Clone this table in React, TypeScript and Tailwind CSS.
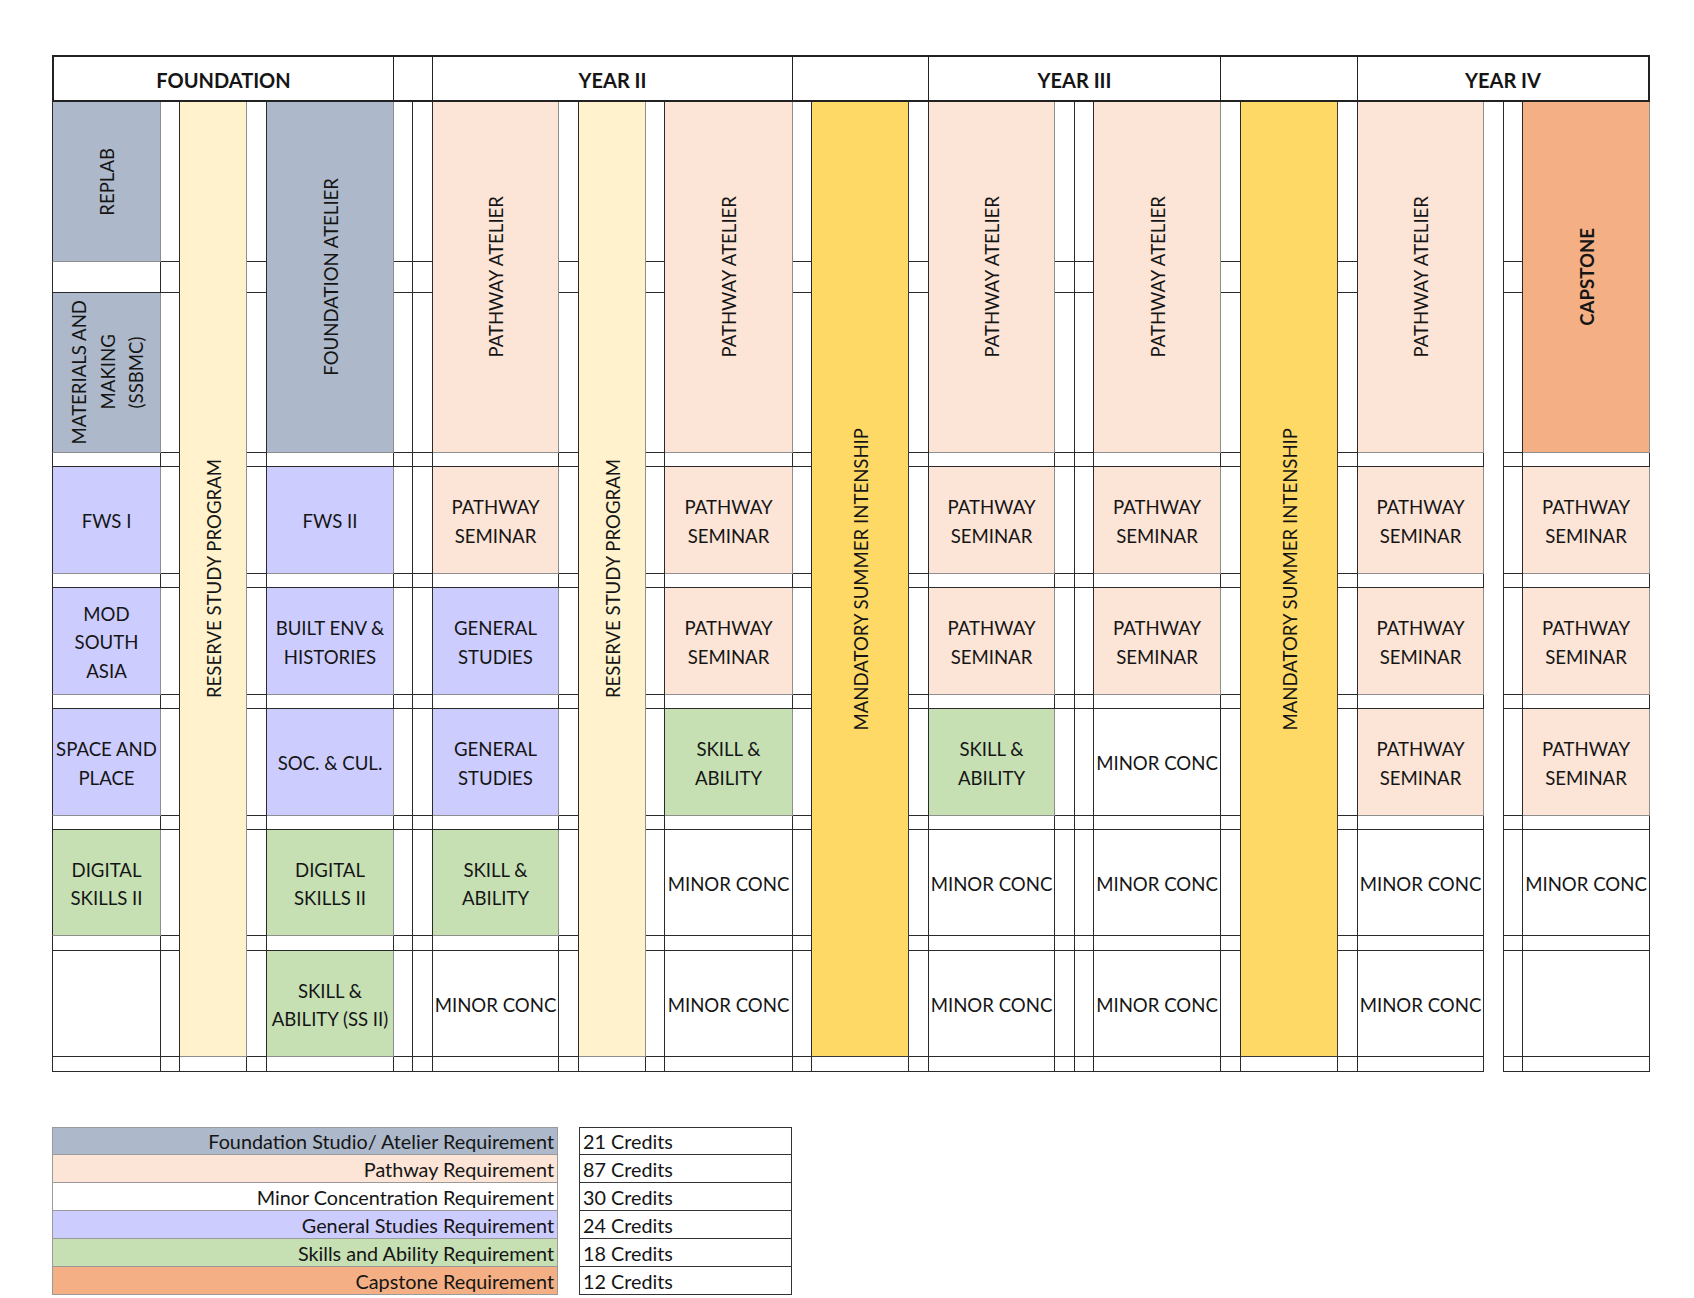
import React from 'react';

type Kind = 'slate' | 'peach' | 'lav' | 'green' | 'cream' | 'yellow' | 'orange' | 'white';

interface CellData {
  text?: string;
  kind: Kind;
  vertical?: boolean;
  bold?: boolean;
}

const bgClass: Record<Kind, string> = {
  slate: 'bg-[#adb9ca] border-[#8e8e8e]',
  peach: 'bg-[#fce4d6] border-[#8e8e8e]',
  lav: 'bg-[#ccccff] border-[#8e8e8e]',
  green: 'bg-[#c6e0b4] border-[#8e8e8e]',
  cream: 'bg-[#fff2cc] border-[#8e8e8e]',
  yellow: 'bg-[#ffd966] border-[#3a3a3a]',
  orange: 'bg-[#f4b084] border-[#8e8e8e]',
  white: 'bg-white border-[#2a2a2a]',
};

const spanClass: Record<number, string> = {
  1: '',
  3: 'row-span-3',
  13: 'row-span-13',
  14: 'row-span-14',
};

const PS: CellData = { text: 'PATHWAY\nSEMINAR', kind: 'peach' };
const MC: CellData = { text: 'MINOR CONC', kind: 'white' };
const GS: CellData = { text: 'GENERAL\nSTUDIES', kind: 'lav' };
const SA: CellData = { text: 'SKILL &\nABILITY', kind: 'green' };
const PA: CellData = { text: 'PATHWAY ATELIER', kind: 'peach', vertical: true };

// content columns: c1, c5, c8, c12, c16, c19, c23, c26
const contentCols = [0, 4, 7, 11, 15, 18, 22, 25];

const contentRows: CellData[][] = [
  [
    { text: 'REPLAB', kind: 'slate', vertical: true },
    { text: 'FOUNDATION ATELIER', kind: 'slate', vertical: true },
    PA, PA, PA, PA, PA,
    { text: 'CAPSTONE', kind: 'orange', vertical: true, bold: true },
  ],
  [{ text: 'MATERIALS AND\nMAKING\n(SSBMC)', kind: 'slate', vertical: true }],
  [
    { text: 'FWS I', kind: 'lav' },
    { text: 'FWS II', kind: 'lav' },
    PS, PS, PS, PS, PS, PS,
  ],
  [
    { text: 'MOD\nSOUTH\nASIA', kind: 'lav' },
    { text: 'BUILT ENV &\nHISTORIES', kind: 'lav' },
    GS, PS, PS, PS, PS, PS,
  ],
  [
    { text: 'SPACE AND\nPLACE', kind: 'lav' },
    { text: 'SOC. & CUL.', kind: 'lav' },
    GS, SA, SA, MC, PS, PS,
  ],
  [
    { text: 'DIGITAL\nSKILLS II', kind: 'green' },
    { text: 'DIGITAL\nSKILLS II', kind: 'green' },
    SA, MC, MC, MC, MC, MC,
  ],
  [
    { kind: 'white' },
    { text: 'SKILL &\nABILITY (SS II)', kind: 'green' },
    MC, MC, MC, MC, MC,
    { kind: 'white' },
  ],
];

// tall cells that start in the first body row
const tallCells: Record<number, { cell: CellData; span: number }> = {
  2: { cell: { text: 'RESERVE STUDY PROGRAM', kind: 'cream', vertical: true }, span: 13 },
  9: { cell: { text: 'RESERVE STUDY PROGRAM', kind: 'cream', vertical: true }, span: 13 },
  13: { cell: { text: 'MANDATORY SUMMER INTENSHIP', kind: 'yellow', vertical: true }, span: 13 },
  20: { cell: { text: 'MANDATORY SUMMER INTENSHIP', kind: 'yellow', vertical: true }, span: 13 },
};

const ROWS = 14;
const COLS = 26;

const BodyCell: React.FC<{ cell: CellData; span: number; first: boolean }> = ({ cell, span, first }) => {
  return (
    <div
      className={`flex items-center justify-center border-r border-b text-center ${bgClass[cell.kind]} ${spanClass[span]} ${first ? 'border-l border-l-[#2a2a2a]' : ''} ${cell.vertical ? 'pl-[2px]' : 'pt-[3px]'}`}
    >
      {cell.text && (
        <span
          className={`whitespace-pre-line leading-[28.5px] ${cell.vertical ? '[writing-mode:vertical-rl] rotate-180' : ''} ${cell.bold ? 'font-bold' : ''}`}
        >
          {cell.text}
        </span>
      )}
    </div>
  );
};

function buildBody() {
  const taken: boolean[][] = Array.from({ length: ROWS }, () => Array(COLS).fill(false));
  const out: React.ReactNode[] = [];
  for (let r = 0; r < ROWS; r++) {
    for (let c = 0; c < COLS; c++) {
      if (taken[r][c]) continue;
      let cell: CellData = { kind: 'white' };
      let span = 1;
      if (r === 0 && tallCells[c]) {
        cell = tallCells[c].cell;
        span = tallCells[c].span;
      } else if (r === 0 && c === 23) {
        // empty spacer column in year IV
        for (let k = 0; k < ROWS; k++) taken[k][c] = true;
        out.push(<div key={`${r}-${c}`} className="row-span-14 border-r border-[#2a2a2a] bg-white" />);
        continue;
      } else if (r % 2 === 0 && contentCols.includes(c)) {
        const row = contentRows[r / 2];
        const item = row[contentCols.indexOf(c)];
        if (item) cell = item;
        if (r === 0 && c !== 0) span = 3;
      }
      for (let k = 0; k < span; k++) taken[r + k][c] = true;
      out.push(<BodyCell key={`${r}-${c}`} cell={cell} span={span} first={c === 0} />);
    }
  }
  return out;
}

const legend = [
  { label: 'Foundation Studio/ Atelier Requirement', credits: '21 Credits', bg: 'bg-[#adb9ca]' },
  { label: 'Pathway Requirement', credits: '87 Credits', bg: 'bg-[#fce4d6]' },
  { label: 'Minor Concentration Requirement', credits: '30 Credits', bg: 'bg-white' },
  { label: 'General Studies Requirement', credits: '24 Credits', bg: 'bg-[#ccccff]' },
  { label: 'Skills and Ability Requirement', credits: '18 Credits', bg: 'bg-[#c6e0b4]' },
  { label: 'Capstone Requirement', credits: '12 Credits', bg: 'bg-[#f4b084]' },
];

export default function App() {
  return (
    <div className="min-h-screen bg-white pt-[55px] pb-[20px] text-[18.6px] text-[#151515] font-['Lato',sans-serif]">
      <div className="ml-[52px] grid w-[1598px] grid-cols-[109px_19px_67px_20px_127px_19px_20px_126px_20px_67px_19px_128px_19px_97px_20px_126px_20px_19px_127px_20px_97px_20px_126px_20px_19px_127px] grid-rows-[47px_160px_31px_160px_14px_107px_14px_107px_14px_107px_14px_106px_15px_106px_15px]">
        {/* header */}
        <div className="col-span-5 flex items-center justify-center border-y-2 border-l-2 border-r border-[#222] pt-[3px] text-[20px] font-bold">FOUNDATION</div>
        <div className="col-span-2 border-y-2 border-r border-[#222]" />
        <div className="col-span-5 flex items-center justify-center border-y-2 border-r border-[#222] pt-[3px] text-[20px] font-bold">YEAR II</div>
        <div className="col-span-3 border-y-2 border-r border-[#222]" />
        <div className="col-span-4 flex items-center justify-center border-y-2 border-r border-[#222] pt-[3px] text-[20px] font-bold">YEAR III</div>
        <div className="col-span-3 border-y-2 border-r border-[#222]" />
        <div className="col-span-4 flex items-center justify-center border-y-2 border-r-2 border-[#222] pt-[3px] text-[20px] font-bold">YEAR IV</div>
        {buildBody()}
      </div>

      {/* legend */}
      <div className="ml-[52px] mt-[55px] grid w-[740px] grid-cols-[506px_213px] gap-x-[21px]">
        {legend.map((l, i) => (
          <React.Fragment key={l.label}>
            <div
              className={`flex h-[28px] items-center justify-end overflow-hidden border-x border-b border-[#9a9a9a] pr-[3px] pt-[2px] text-[19.8px] ${l.bg} ${i === 0 ? 'border-t' : ''}`}
            >
              <span className="whitespace-nowrap">{l.label}</span>
            </div>
            <div
              className={`flex h-[28px] items-center border-x border-b border-[#333] pl-[3px] pt-[2px] text-[19.8px] ${i === 0 ? 'border-t' : ''}`}
            >
              <span className="whitespace-nowrap">{l.credits}</span>
            </div>
          </React.Fragment>
        ))}
      </div>
    </div>
  );
}
